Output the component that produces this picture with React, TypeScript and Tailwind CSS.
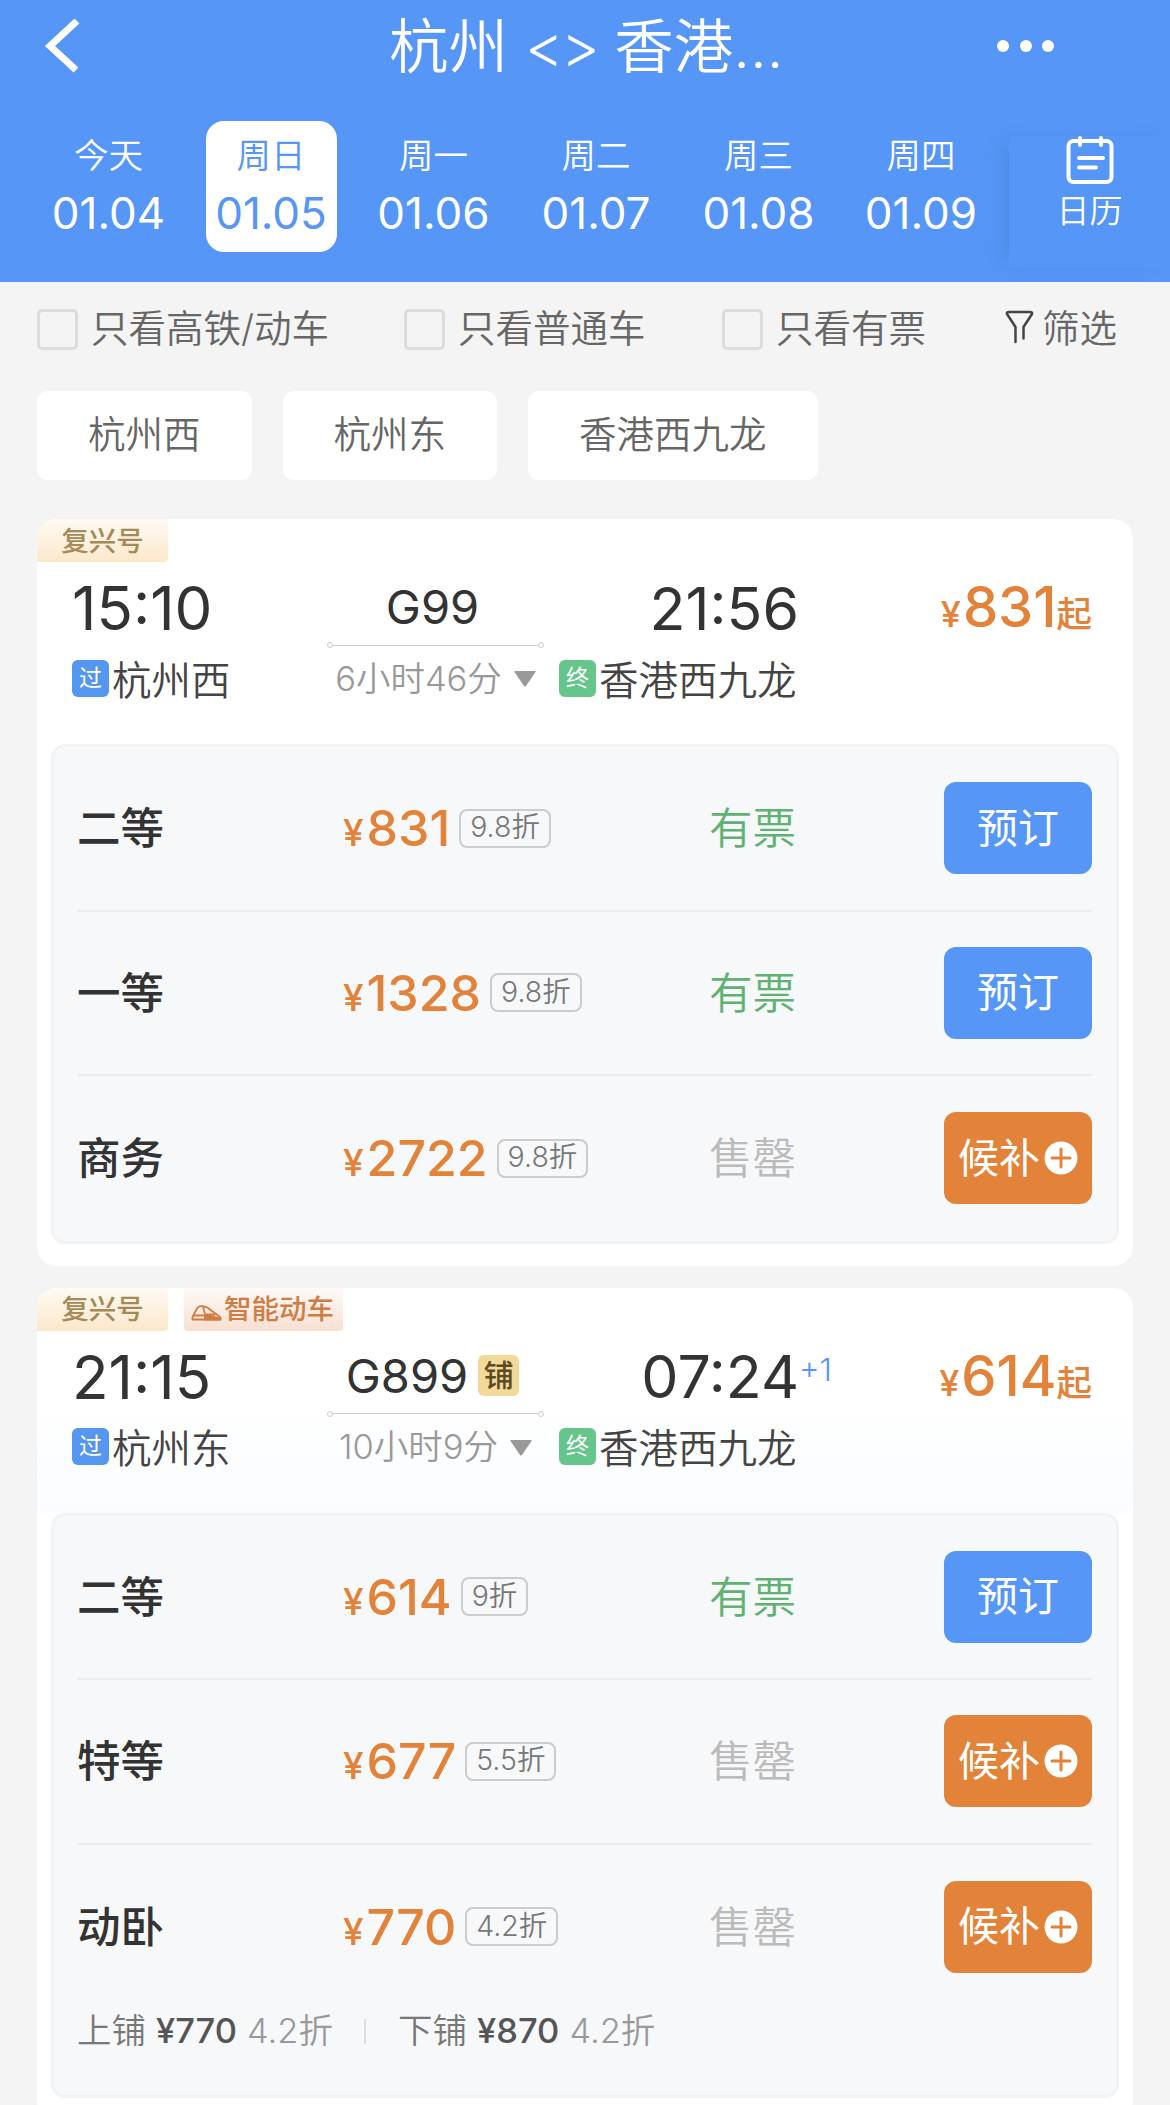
import { clsx } from 'clsx'

type Seat = {
  name: string
  price: number
  discount: string
  available: boolean
}

type Berth = {
  name: string
  price: number
  discount: string
}

type Train = {
  code: string
  smart?: boolean
  sleeper?: boolean
  departure: string
  arrival: string
  nextDay?: boolean
  from: string
  to: string
  duration: string
  price: number
  seats: Seat[]
  berths?: Berth[]
}

const days = [
  { label: '今天', date: '01.04' },
  { label: '周日', date: '01.05' },
  { label: '周一', date: '01.06' },
  { label: '周二', date: '01.07' },
  { label: '周三', date: '01.08' },
  { label: '周四', date: '01.09' },
]

const stations = ['杭州西', '杭州东', '香港西九龙']

const trains: Train[] = [
  {
    code: 'G99',
    departure: '15:10',
    arrival: '21:56',
    from: '杭州西',
    to: '香港西九龙',
    duration: '6小时46分',
    price: 831,
    seats: [
      { name: '二等', price: 831, discount: '9.8折', available: true },
      { name: '一等', price: 1328, discount: '9.8折', available: true },
      { name: '商务', price: 2722, discount: '9.8折', available: false },
    ],
  },
  {
    code: 'G899',
    smart: true,
    sleeper: true,
    departure: '21:15',
    arrival: '07:24',
    nextDay: true,
    from: '杭州东',
    to: '香港西九龙',
    duration: '10小时9分',
    price: 614,
    seats: [
      { name: '二等', price: 614, discount: '9折', available: true },
      { name: '特等', price: 677, discount: '5.5折', available: false },
      { name: '动卧', price: 770, discount: '4.2折', available: false },
    ],
    berths: [
      { name: '上铺', price: 770, discount: '4.2折' },
      { name: '下铺', price: 870, discount: '4.2折' },
    ],
  },
]

function Header() {
  return (
    <header className="h-[282px] bg-[#5596f6] text-white">
      <div className="flex h-[92px] items-center">
        <button className="ml-[44px] w-[345px]">
          <svg width="38" height="54" viewBox="0 0 38 54" fill="none">
            <path
              d="M33 2 L6 27 L32 51"
              stroke="currentColor"
              strokeWidth="7"
            />
          </svg>
        </button>
        <h1 className="w-[605px] pt-[2px] text-[59.500px] leading-none font-[350] whitespace-nowrap">
          杭州 <span className="tracking-[-2.500px]">&lt;&gt;</span> 香港...
        </h1>
        <button className="ml-[3px] flex gap-[10.500px]">
          <i className="h-3 w-3 rounded-full bg-white" />
          <i className="h-3 w-3 rounded-full bg-white" />
          <i className="h-3 w-3 rounded-full bg-white" />
        </button>
      </div>
      <div className="flex h-[190px] items-start overflow-hidden pt-[29px]">
        <nav className="flex w-[1009px] shrink-0 gap-[31.500px] pl-[43px]">
          {days.map((day, i) => (
            <button
              key={day.date}
              className={clsx(
                'flex h-[131px] w-[131px] shrink-0 flex-col items-center rounded-[18px] pt-[18px] leading-none',
                i === 1 && 'bg-white text-[#5596f6]',
              )}
            >
              <span className="text-[34.500px] font-[350]">{day.label}</span>
              <span className="mt-[17px] text-[44px]">{day.date}</span>
            </button>
          ))}
        </nav>
        <button className="mt-[15px] flex h-[132px] w-[161px] flex-col items-center bg-[#5596f6] shadow-[-12px_0_18px_-8px_rgba(60,110,180,0.3)]">
          <svg width="48" height="48" viewBox="0 0 48 48" fill="none" stroke="currentColor" strokeWidth="4" strokeLinecap="round">
            <rect x="2.500" y="5" width="43" height="41" rx="5" />
            <path d="M14 2v7M35 2v7M13 22h24M13 31.500h17" />
          </svg>
          <span className="mt-[11px] text-[33px] leading-none font-[350]">日历</span>
        </button>
      </div>
    </header>
  )
}

function Check({ label }: { label: string }) {
  return (
    <label className="flex items-center gap-[13px]">
      <i className="h-[41px] w-[41px] rounded-[5px] border-[3px] border-[#dcdcdc]" />
      <span className="pb-[2px]">{label}</span>
    </label>
  )
}

function Filters() {
  return (
    <>
      <div className="flex h-[95px] items-center pl-[37px] text-[37.500px] leading-none font-[350] whitespace-nowrap text-[#666]">
        <div className="w-[367px]">
          <Check label="只看高铁/动车" />
        </div>
        <div className="w-[318px]">
          <Check label="只看普通车" />
        </div>
        <div className="w-[283px]">
          <Check label="只看有票" />
        </div>
        <button className="flex items-center gap-2 pb-[2px]">
          <svg className="mb-1" width="29" height="34" viewBox="0 0 29 34" fill="none" stroke="#444" strokeWidth="2.500" strokeLinejoin="round" strokeLinecap="round">
            <path d="M10.500 32V17L2 4Q1.500 2 4 2H25Q27.500 2 27 4L18.500 17V28.500" />
          </svg>
          筛选
        </button>
      </div>
      <div className="flex h-[103px] gap-[31px] pt-[14px] pl-[37px] text-[37.500px] font-[350] text-[#666]">
        {stations.map((station) => (
          <button
            key={station}
            className="h-[89px] rounded-[11px] bg-white px-[51px] pb-[2px] leading-none"
          >
            {station}
          </button>
        ))}
      </div>
    </>
  )
}

function TrainTags({ smart }: { smart?: boolean }) {
  return (
    <div className="flex h-[43px] gap-4 text-[27.500px] leading-none font-medium">
      <span className="flex w-[131px] items-center justify-center rounded-br-[4px] bg-linear-to-b from-[#fffaf5] to-[#fbe8ca] pt-[2px] text-[#a68a55]">
        复兴号
      </span>
      {smart && (
        <span className="flex w-[159px] items-center rounded-b-[4px] bg-linear-to-b from-[#fefaf8] to-[#f8dfd0] pt-[2px] pl-[7px] text-[#d07c45]">
          <svg className="mt-[6px] mr-[2px]" width="31" height="16" viewBox="0 0 31 16" fill="none" stroke="currentColor" strokeWidth="1.800" strokeLinejoin="round">
            <path d="M1.500 14.500Q1 13 2 11L6 3.500Q7 1.500 10 1.200Q14 1 17 3L29.500 12.500V14.500Z" />
            <path d="M12 1.500L14 9.500H24M14 10.500H3" />
            <path d="M13 10H20L30 13V15.500H13Z" fill="currentColor" stroke="none" />
          </svg>
          智能动车
        </span>
      )}
    </div>
  )
}

function TrainInfo({ train }: { train: Train }) {
  return (
    <div className="flex h-[182px] pt-[14px] pl-[35px] leading-none whitespace-nowrap">
      <div className="w-[255px]">
        <div className="flex h-[64px] items-center text-[60px] text-[#333]">
          {train.departure}
        </div>
        <div className="mt-[19px] flex h-[38px] items-center gap-[3px]">
          <i className="flex h-[37px] w-[37px] items-center justify-center rounded-[6px] bg-[#5596f0] text-[23px] text-white not-italic">
            过
          </i>
          <span className="pt-[7px] text-[39.500px] font-[350] text-[#444]">{train.from}</span>
        </div>
      </div>
      <div className="w-[217px]">
        <div className="flex h-[64px] items-center justify-center pr-[6px] pb-[3px] text-[47px] text-[#333]">
          {train.code}
          {train.sleeper && (
            <i className="ml-[10px] flex h-[41px] w-[41px] items-center justify-center rounded-[6px] bg-[#f3d999] text-[30px] font-medium text-[#5b4a22] not-italic">
              铺
            </i>
          )}
        </div>
        <div className="mt-[2px] flex items-center">
          <i className="h-[6px] w-[6px] rounded-full border border-[#ccc]" />
          <i className="h-px flex-1 bg-[#ccc]" />
          <i className="h-[6px] w-[6px] rounded-full border border-[#ccc]" />
        </div>
        <div className="mt-[12px] flex h-[38px] items-center justify-center gap-3 text-[34.500px] font-[350] text-[#999]">
          {train.duration}
          <svg width="22" height="16" viewBox="0 0 22 16">
            <path d="M1 0H21Q22 0 21.500 1L12 15Q11 16 10 15L0.500 1Q0 0 1 0Z" fill="#999" />
          </svg>
        </div>
      </div>
      <div className="ml-[15px] w-[240px]">
        <div className="relative flex h-[64px] items-center justify-end text-[59px] text-[#333]">
          {train.arrival}
          {train.nextDay && (
            <sup className="absolute top-[9px] left-full text-[31.500px] leading-none font-[350] text-[#5596f6]">
              +1
            </sup>
          )}
        </div>
        <div className="mt-[19px] flex h-[38px] items-center gap-[3px]">
          <i className="flex h-[37px] w-[37px] items-center justify-center rounded-[6px] bg-[#65c58b] text-[23px] text-white not-italic">
            终
          </i>
          <span className="pt-[7px] text-[39.500px] font-[350] text-[#444]">{train.to}</span>
        </div>
      </div>
      <div className="flex h-[64px] flex-1 items-baseline justify-end pt-[3px] pr-[41px] font-medium text-[#e38239]">
        <span className="mr-[2px] text-[36px]">¥</span>
        <span className="text-[56px]">{train.price}</span>
        <span className="text-[35.500px]">起</span>
      </div>
    </div>
  )
}

function SeatRow({ seat, last }: { seat: Seat; last: boolean }) {
  return (
    <div
      className={clsx(
        'flex h-[164.500px] items-center leading-none',
        !last && 'border-b-2 border-[#ededf0]',
      )}
    >
      <span className="w-[266px] pt-px text-[43.500px] font-medium text-[#333]">{seat.name}</span>
      <div className="flex w-[366px] items-center">
        <div className="flex items-baseline font-medium text-[#e38239]">
          <span className="mr-[3px] text-[37px]">¥</span>
          <span className="text-[50px]">{seat.price}</span>
        </div>
        <span className="ml-[9px] flex h-[39px] items-center rounded-[8px] border-2 border-[#ccc] px-[9px] pb-[2px] text-[28.500px] font-[350] text-[#777]">
          {seat.discount}
        </span>
      </div>
      <span
        className={clsx(
          'flex-1 pt-px text-[43.500px] font-[350]',
          seat.available ? 'text-[#5fb272]' : 'text-[#bbb]',
        )}
      >
        {seat.available ? '有票' : '售罄'}
      </span>
      {seat.available ? (
        <button className="h-[92px] w-[148px] rounded-[12px] bg-[#5596f6] text-[41px] text-white">
          预订
        </button>
      ) : (
        <button className="flex h-[92px] w-[148px] items-center justify-center gap-[4px] rounded-[12px] bg-[#e38239] text-[41px] text-white">
          候补
          <svg width="34" height="34" viewBox="0 0 34 34">
            <circle cx="17" cy="17" r="16.500" fill="#fff" />
            <path d="M17 8V26M8 17H26" stroke="#e38239" strokeWidth="3" strokeLinecap="round" />
          </svg>
        </button>
      )}
    </div>
  )
}

function TrainCard({ train }: { train: Train }) {
  return (
    <section className="overflow-hidden rounded-[20px] bg-white pb-[22px]">
      <div className={clsx(train.smart && 'bg-linear-to-b from-white from-50% to-[#fafcff]')}>
        <TrainTags smart={train.smart} />
        <TrainInfo train={train} />
      </div>
      <div className="mx-[14px] rounded-[14px] border-[3px] border-[#f2f3f5] bg-[#f7f8fa] pr-6 pl-[23px]">
        {train.seats.map((seat, i) => (
          <SeatRow key={seat.name} seat={seat} last={i === train.seats.length - 1} />
        ))}
        {train.berths && (
          <div className="flex h-[86px] items-start pt-[5px] text-[34.500px] leading-none font-[350]">
            {train.berths.map((berth, i) => (
              <div key={berth.name} className="flex items-center gap-[10px]">
                {i > 0 && <i className="mr-[22px] ml-[31px] h-[25px] w-[2px] bg-[#ddd]" />}
                <span className="text-[#777]">{berth.name}</span>
                <span className="font-medium text-[#555]">¥{berth.price}</span>
                <span className="text-[#999]">{berth.discount}</span>
              </div>
            ))}
          </div>
        )}
      </div>
    </section>
  )
}

export default function App() {
  return (
    <div className="h-[2105px] w-[1170px] overflow-hidden bg-[#f4f4f4] font-['Inter','Noto_Sans_CJK_SC',sans-serif]">
      <Header />
      <Filters />
      <main className="mt-[39px] flex flex-col gap-[22px] px-[37px]">
        {trains.map((train) => (
          <TrainCard key={train.code} train={train} />
        ))}
      </main>
    </div>
  )
}
